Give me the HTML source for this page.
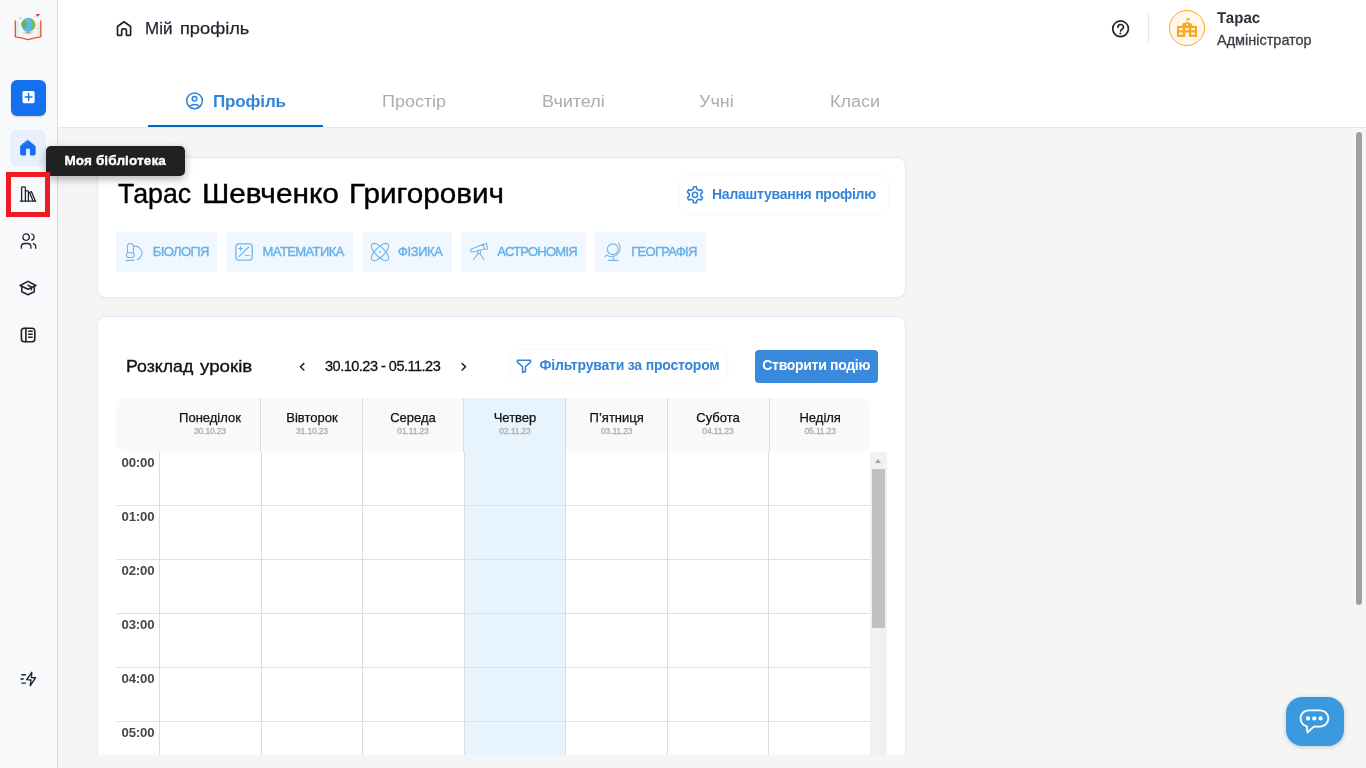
<!DOCTYPE html>
<html lang="uk">
<head>
<meta charset="utf-8">
<title>Мій профіль</title>
<style>
*{box-sizing:border-box;margin:0;padding:0}
html,body{width:1366px;height:768px;overflow:hidden}
body{font-family:"Liberation Sans",sans-serif;background:#f5f5f5;color:#111;position:relative}
.abs{position:absolute}
.t{position:absolute;white-space:nowrap;line-height:1}
/* sidebar */
#side{position:absolute;left:0;top:0;width:58px;height:768px;background:#f8f9fa;border-right:1px solid #dcdcdc}
#plus{left:11px;top:80px;width:35px;height:36px;border-radius:6px;background:#1570ef;box-shadow:0 1px 2px rgba(0,0,0,.15)}
#homeb{left:10px;top:130px;width:36px;height:36px;border-radius:6px;background:#e8f0fd}
#red{left:6px;top:172px;width:44px;height:45px;border:5px solid #ed1c24}
.ic{position:absolute;overflow:visible}
/* header */
#head{position:absolute;left:58px;top:0;width:1308px;height:128px;background:#fff;border-bottom:1px solid #dcecf9}
#tabline{left:148px;top:125px;width:175px;height:2px;background:#0466c8}
.tab{font-size:17.4px;color:#adadad;top:92.5px;transform:scaleX(1.033);transform-origin:0 50%}
.sx{transform-origin:0 50%}
.ttl{top:179.5px;font-size:28px;color:#000;-webkit-text-stroke:.4px #000}
.sch{top:357.6px;font-size:17.4px;color:#111;-webkit-text-stroke:.35px #111}
/* tooltip */
#tip{left:46px;top:146px;width:139px;height:30px;border-radius:5px;background:#212121;box-shadow:0 3px 9px rgba(0,0,0,.3)}
/* cards */
.card{position:absolute;background:#fff;border:1px solid #dcecfa;border-radius:9px;box-shadow:0 1px 3px rgba(0,0,0,.04)}
.tag{position:absolute;top:232px;height:39.5px;background:#f1f7fe}
.tag span{position:absolute;top:12.8px;font-size:13px;line-height:1;color:#63b0e8;letter-spacing:-0.6px;white-space:nowrap;-webkit-text-stroke:.35px #63b0e8}
.btnw{position:absolute;background:#fff;border-radius:7px;box-shadow:0 0 3px rgba(0,0,0,.06)}
.day{position:absolute;top:398px;height:53px;width:102px;text-align:center}
.day b{display:block;font-weight:400;font-size:13px;line-height:1;margin-top:13px;color:#111;-webkit-text-stroke:.25px #111}
.day i{display:block;font-style:normal;font-size:8.5px;line-height:1;margin-top:3.4px;color:#adadad;letter-spacing:-0.15px;-webkit-text-stroke:.3px #adadad}
.hl{position:absolute;left:116px;width:755px;height:1px;background:#e0e0e0}
.hv{position:absolute;top:398px;width:1px;height:54px;background:#dcdcdc}
.vl{position:absolute;top:452px;width:1px;height:303px;background:#dcdcdc}
.tm{position:absolute;left:114px;width:40.5px;text-align:right;font-size:13.2px;font-weight:700;line-height:1;color:#474747;letter-spacing:-.2px;padding-right:.2px}
</style>
</head>
<body>
<div id="app" style="position:absolute;left:0;top:0;width:1366px;height:768px;will-change:transform">
<!-- header -->
<div id="head"></div>
<div class="t sx" style="left:145.1px;top:19.5px;font-size:16.5px;color:#1f2430;-webkit-text-stroke:.25px #1f2430;transform:scaleX(1.03)">Мій</div>
<div class="t sx" style="left:179.6px;top:19.5px;font-size:16.5px;color:#1f2430;-webkit-text-stroke:.25px #1f2430;transform:scaleX(1.105)">профіль</div>
<div class="abs" style="left:1148px;top:14px;width:1px;height:29px;background:#e6e6e6"></div>
<div class="abs" style="left:1168.8px;top:9.6px;width:36.6px;height:36.6px;border-radius:50%;border:1.2px solid #f8a724;background:#fff8eb"></div>
<div class="t sx" style="left:1216.8px;top:9.9px;font-size:15.7px;font-weight:700;color:#2d3138;transform:scaleX(.961) rotate(.03deg)">Тарас</div>
<div class="t sx" style="left:1216.6px;top:33.1px;font-size:14.2px;color:#3a3e45;-webkit-text-stroke:.3px #3a3e45;transform:scaleX(1.02)">Адміністратор</div>

<!-- tabs -->
<div class="t" style="left:213px;top:92.5px;font-size:17px;letter-spacing:-.13px;font-weight:700;color:#3484d8">Профіль</div>
<div class="t tab" style="left:382px">Простір</div>
<div class="t tab" style="left:541.5px">Вчителі</div>
<div class="t tab" style="left:699px">Учні</div>
<div class="t tab" style="left:829.5px">Класи</div>
<div class="abs" id="tabline"></div>

<!-- main scrollbar -->
<div class="abs" style="left:1356px;top:132px;width:6px;height:473px;border-radius:3px;background:#a0a0a0;box-shadow:0 0 0 1px #f9f9f9"></div>

<!-- card 1 -->
<div class="card" style="left:97px;top:157px;width:809px;height:141px"></div>
<div class="t sx ttl" style="left:118.4px;transform:scaleX(.956)">Тарас</div>
<div class="t sx ttl" style="left:201.5px;transform:scaleX(1.064)">Шевченко</div>
<div class="t sx ttl" style="left:348.5px;transform:scaleX(1.06)">Григорович</div>
<div class="btnw" style="left:679.6px;top:175.8px;width:208px;height:38.6px"></div>
<div class="t" style="left:712px;top:187.4px;font-size:14px;letter-spacing:-.25px;font-weight:700;color:#3484d8">Налаштування профілю</div>

<div class="tag" style="left:116px;width:101px"><span style="left:36.8px">БІОЛОГІЯ</span></div>
<div class="tag" style="left:226px;width:127px"><span style="left:36.6px">МАТЕМАТИКА</span></div>
<div class="tag" style="left:362px;width:90px"><span style="left:36px;letter-spacing:-.4px">ФІЗИКА</span></div>
<div class="tag" style="left:461px;width:125px"><span style="left:36.3px;letter-spacing:-.75px">АСТРОНОМІЯ</span></div>
<div class="tag" style="left:595px;width:111px"><span style="left:36.2px;letter-spacing:-.7px">ГЕОГРАФІЯ</span></div>

<!-- card 2 -->
<div class="card" style="left:97px;top:316px;width:809px;height:461px;border-bottom-left-radius:0;border-bottom-right-radius:0"></div>
<div class="t sx sch" style="left:126.1px;transform:scaleX(1.019)">Розклад</div>
<div class="t sx sch" style="left:200.4px;transform:scaleX(1.077)">уроків</div>
<div class="t" style="left:325px;top:359px;font-size:14.5px;letter-spacing:-.5px;color:#111;-webkit-text-stroke:.3px #111">30.10.23 - 05.11.23</div>
<div class="btnw" style="left:511px;top:349.5px;width:216px;height:33.5px"></div>
<div class="t" style="left:539.5px;top:358.3px;font-size:14px;letter-spacing:-.2px;font-weight:700;color:#3484d8">Фільтрувати за простором</div>
<div class="abs" style="left:755px;top:350px;width:123px;height:33px;border-radius:4px;background:#3989dc"></div>
<div class="t" style="left:762.3px;top:357.7px;font-size:14px;letter-spacing:-.3px;font-weight:700;color:#fff">Створити подію</div>

<!-- table header -->
<div class="abs" style="left:116px;top:398px;width:754px;height:54px;border-radius:10px;background:#f8f9fb"></div>
<div class="abs" style="left:464px;top:398px;width:101px;height:357px;background:#e8f4fd"></div>
<div class="day" style="left:159px"><b>Понеділок</b><i>30.10.23</i></div>
<div class="day" style="left:261px"><b>Вівторок</b><i>31.10.23</i></div>
<div class="day" style="left:362px"><b>Середа</b><i>01.11.23</i></div>
<div class="day" style="left:464px"><b>Четвер</b><i>02.11.23</i></div>
<div class="day" style="left:565.7px"><b>П’ятниця</b><i>03.11.23</i></div>
<div class="day" style="left:667px"><b>Субота</b><i>04.11.23</i></div>
<div class="day" style="left:769.2px"><b>Неділя</b><i>05.11.23</i></div>

<div class="hv" style="left:260px"></div>
<div class="hv" style="left:362px"></div>
<div class="hv" style="left:463px"></div>
<div class="hv" style="left:565px"></div>
<div class="hv" style="left:667px"></div>
<div class="hv" style="left:769px"></div>
<!-- grid -->
<div class="hl" style="top:505px"></div>
<div class="hl" style="top:559px"></div>
<div class="hl" style="top:613px"></div>
<div class="hl" style="top:667px"></div>
<div class="hl" style="top:721px"></div>
<div class="vl" style="left:159px"></div>
<div class="vl" style="left:261px"></div>
<div class="vl" style="left:362px"></div>
<div class="vl" style="left:464px"></div>
<div class="vl" style="left:565px"></div>
<div class="vl" style="left:667px"></div>
<div class="vl" style="left:768px"></div>
<div class="tm" style="top:455.8px">00:00</div>
<div class="tm" style="top:509.8px">01:00</div>
<div class="tm" style="top:563.8px">02:00</div>
<div class="tm" style="top:617.8px">03:00</div>
<div class="tm" style="top:671.8px">04:00</div>
<div class="tm" style="top:725.8px">05:00</div>

<!-- inner scrollbar -->
<div class="abs" style="left:870px;top:452px;width:17px;height:303px;background:#f1f1f1"></div>
<div class="abs" style="left:872px;top:469px;width:13px;height:159px;background:#c1c1c1"></div>
<div class="abs" style="left:874.6px;top:458.8px;width:0;height:0;border-left:3.7px solid transparent;border-right:3.7px solid transparent;border-bottom:4px solid #a3a3a3"></div>

<!-- bottom mask -->
<div class="abs" style="left:59px;top:755px;width:1307px;height:13px;background:#f5f5f5"></div>

<!-- chat -->
<div class="abs" style="left:1286px;top:697px;width:58px;height:49px;border-radius:16px;background:#3b9ade;box-shadow:0 1px 4px rgba(0,0,0,.2)"></div>

<!-- sidebar -->
<div id="side"></div>
<div class="abs" id="plus"></div>
<div class="abs" id="homeb"></div>

<!-- tooltip -->
<div class="abs" id="tip"></div>
<div class="t" style="left:64.4px;top:153.6px;font-size:13.5px;font-weight:700;color:#fff;letter-spacing:.14px;-webkit-text-stroke:.35px #fff">Моя бібліотека</div>
<div class="abs" id="red"></div>

<svg class="abs" style="left:0;top:0;pointer-events:none" width="1366" height="768" viewBox="0 0 1366 768" fill="none" stroke-linecap="round" stroke-linejoin="round">
<!-- logo -->
<defs>
<linearGradient id="pgL" x1="0" x2="1" y1="0" y2="0"><stop offset="0" stop-color="#e4e4e4"/><stop offset=".35" stop-color="#f6f6f6"/><stop offset="1" stop-color="#fdfdfd"/></linearGradient>
<linearGradient id="pgR" x1="1" x2="0" y1="0" y2="0"><stop offset="0" stop-color="#e6e6e6"/><stop offset=".35" stop-color="#f4f4f4"/><stop offset="1" stop-color="#fbfbfb"/></linearGradient>
<radialGradient id="shd"><stop offset="0" stop-color="#8f8f8f"/><stop offset="1" stop-color="#cfcfcf" stop-opacity="0"/></radialGradient>
</defs>
<g>
<path d="M15.300 21 V36.800 C19 37.200 24 38.400 28.200 39.700 C32.400 38.400 37.400 37.200 40.800 36.800 V21" stroke="#e9531f" stroke-width="1.300" fill="none"/>
<path d="M16.200 21.300 C20 21.300 24.500 21.800 28.200 23.200 V38.600 C24 37.200 20 36.300 16.200 36Z" fill="url(#pgL)" stroke="none"/>
<path d="M40 21.300 C36.400 21.300 31.900 21.800 28.200 23.200 V38.600 C32.400 37.200 36.400 36.300 40 36Z" fill="url(#pgR)" stroke="none"/>
<ellipse cx="28.200" cy="32.400" rx="6.600" ry="2.800" fill="url(#shd)" stroke="none"/>
<circle cx="28.300" cy="24.800" r="7" fill="#5db4ee" stroke="none"/>
<path d="M22 22.400c1.200-1.500 2.700-2.200 3.600-1.600c.7 .9-.4 1.900 .1 3.100c.7 1.300 .7 2.600 .9 3.800c-1.500 .9-3.300-.1-4.400-1.500c-.9-1.300-1-2.700-.2-3.800z" fill="#6db52d" stroke="none"/>
<path d="M31 18.400c2.600 1 4.400 3.500 4.400 6.400c0 1.700-.6 3.200-1.700 4.300c-1.900 .5-3.600-.2-3.300-1.700c.3-1.500 2.300-1.900 2.500-3.400c.3-1.700-1.700-2.500-1.900-5.600z" fill="#7cc02e" stroke="none"/>
<ellipse cx="28.100" cy="21" rx="1.300" ry="1" fill="#9ccc3c" stroke="none"/>
<path d="M35.800 13.900 L40 14.100 L37.700 16.900Z" fill="#d33a30" stroke="none"/>
<path d="M33.300 17.400 L35.900 15.400" stroke="#f1b590" stroke-width=".9" stroke-dasharray="1.100 .7"/>
<ellipse cx="20.700" cy="18.300" rx="2.100" ry=".8" fill="#a9d4f5" stroke="none"/>
<ellipse cx="38" cy="28.800" rx="1.400" ry=".8" fill="#b9dcf7" stroke="none"/>
<ellipse cx="17" cy="27" rx="1" ry=".8" fill="#d3e9fa" stroke="none"/>
</g>
<!-- plus -->
<rect x="22.500" y="91" width="12.100" height="12.200" rx="1.600" fill="#fff" stroke="none"/>
<path d="M25.200 97.100H32M28.600 93.600V100.600" stroke="#1570ef" stroke-width="1.500"/>
<!-- home filled -->
<path d="M27.900 140.400 L35.100 146.200 V154 a1 1 0 0 1-1 1 H30.400 V148.200 H25.600 V155 H21.700 a1 1 0 0 1-1-1 V146.200Z" fill="#1570ef" stroke="#1570ef" stroke-width="1"/>
<!-- library -->
<g stroke="#1f2430" stroke-width="1.300">
<path d="M21.600 201.200V187.900a1 1 0 0 1 1-1h1.800a1 1 0 0 1 1 1V201.200"/>
<path d="M25.400 190.900h2.200a.8 .8 0 0 1 .8 .8V201.200"/>
<path d="M29.500 192.500l1.900-.9 3.900 9.400"/>
<path d="M29.500 192.500l3.700 8.700"/>
<path d="M20.300 201.200H35.700"/>
</g>
<!-- users -->
<g stroke="#1f2430" stroke-width="1.600" transform="translate(18.900 231.500) scale(.8)">
<circle cx="9" cy="7" r="4"/><path d="M3 21v-2a4 4 0 0 1 4-4h4a4 4 0 0 1 4 4v2"/><path d="M16 3.130a4 4 0 0 1 0 7.750"/><path d="M21 21v-2a4 4 0 0 0-3-3.850"/>
</g>
<!-- grad cap -->
<g stroke="#1f2430" stroke-width="1.500">
<path d="M28 281.300 L35.900 285.500 L28 289.300 L20.100 285.500Z"/>
<path d="M21.800 286.500V291.700L28 294.700L34.300 291.700V286.500"/>
<path d="M28 285.100L31.400 287.100V289.800"/>
</g>
<!-- notebook -->
<g stroke="#222" stroke-width="1.600">
<rect x="21.400" y="328.200" width="13.400" height="13.600" rx="2.800"/>
<path d="M25.900 328.400V341.600"/>
<path d="M28.700 331.300H32.200M28.700 334.300H32.200M28.700 337.200H32.200" stroke-width="1.500"/>
</g>
<!-- bolt -->
<g stroke="#1f2430" stroke-width="1.400">
<path d="M31.800 672.300 L26.700 679.600 L30.900 680 L30.300 685.700 L35.500 677.800 L31.400 677.500Z"/>
<path d="M21.400 674.700H25.900M20.400 679H23.700M21.400 683.100H25.900" stroke-linecap="butt"/>
</g>
<!-- header home -->
<path d="M124 21.800 L117.500 26.500 V34.400 a1 1 0 0 0 1 1 h2.200 a1 1 0 0 0 1-1 V30.200 a1.300 1.300 0 0 1 1.300-1.300 h2.100 a1.300 1.300 0 0 1 1.300 1.300 V34.400 a1 1 0 0 0 1 1 h2.200 a1 1 0 0 0 1-1 V26.500 Z" stroke="#1f2430" stroke-width="1.700"/>
<!-- help -->
<g stroke="#1f2430" stroke-width="1.700">
<circle cx="1120.550" cy="28.800" r="7.850"/>
<path d="M1117.900 27.200a2.750 2.500 0 1 1 4.100 2c-.9 .6-1.400 1-1.400 1.700"/>
<path d="M1120.300 33.500v.050" stroke-width="2"/>
</g>
<!-- school -->
<g fill="#f9a620" stroke="none">
<rect x="1177" y="25.900" width="20" height="11"/>
<path d="M1182.200 26V24.800a4.850 2.200 0 0 1 9.700 0V26Z"/>
<rect x="1186.600" y="18.300" width=".9" height="4.600"/>
<rect x="1187" y="18.300" width="2.900" height="1.800"/>
</g>
<g fill="#fef8ea" stroke="none">
<rect x="1179" y="28.100" width="3.800" height="2.100"/><rect x="1185.200" y="28.100" width="3.800" height="2.100"/><rect x="1191.200" y="28.100" width="3.800" height="2.100"/>
<rect x="1179" y="32.500" width="3.800" height="2.200"/><rect x="1185.200" y="32.500" width="3.800" height="4.500"/><rect x="1191.200" y="32.500" width="3.800" height="2.200"/>
<rect x="1186.100" y="24" width="1.900" height="1.500"/>
</g>
<!-- profile tab icon -->
<g stroke="#3182d8" stroke-width="1.500">
<circle cx="194.550" cy="100.850" r="7.850"/>
<circle cx="194.550" cy="98.700" r="2.300"/>
<path d="M189.400 106.500c1.300-1.400 3.100-2.100 5.150-2.100s3.850 .7 5.150 2.100"/>
</g>
<!-- gear -->
<g stroke="#3182d8" stroke-width="1.500">
<path d="M693.18 189.24 L693.59 186.87 L696.41 186.87 L696.82 189.24 L698.95 190.47 L701.20 189.64 L702.61 192.08 L700.77 193.62 L700.77 196.08 L702.61 197.62 L701.20 200.06 L698.95 199.23 L696.82 200.46 L696.41 202.83 L693.59 202.83 L693.18 200.46 L691.05 199.23 L688.80 200.06 L687.39 197.62 L689.23 196.08 L689.23 193.62 L687.39 192.08 L688.80 189.64 L691.05 190.47Z"/>
<circle cx="695" cy="194.850" r="2.600"/>
</g>
<!-- subject icons -->
<g stroke="#74b6ec" stroke-width="1.100">
<!-- microscope -->
<path d="M127.400 252.700V246.500a3 3 0 0 1 6 0V252.700"/>
<rect x="126.300" y="252.700" width="8" height="4.800" rx="2.400"/>
<path d="M126.300 260.400H134"/>
<path d="M133.600 246.300a6.900 6.900 0 0 1 3.600 13.300"/>
<!-- math -->
<rect x="235.900" y="243.900" width="16.300" height="16.300" rx="3.200" stroke-width="1.300"/>
<path d="M239 256.600L248.800 247"/>
<path d="M238.600 248.500H242.400M240.500 246.600V250.400"/>
<path d="M245.100 255.300H249.300"/>
<!-- atom -->
<ellipse cx="380" cy="252" rx="11.200" ry="4.600" transform="rotate(45 380 252)"/>
<ellipse cx="380" cy="252" rx="11.200" ry="4.600" transform="rotate(-45 380 252)"/>
<rect x="379.200" y="251.200" width="1.600" height="1.600" fill="#74b6ec" stroke="none"/>
<!-- telescope -->
<path d="M470.300 249.600L483.300 244.300L484.400 249L476.500 251.200L471.300 251.900Z"/>
<path d="M483.300 244.200L486.300 243.500L487.800 249.100L484.500 249.300"/>
<circle cx="479" cy="252.100" r="1.700"/>
<path d="M478.200 253.600L473.500 259.500M479.900 253.600L483.800 259.500"/>
<!-- globe -->
<circle cx="612.750" cy="249.250" r="5.400"/>
<path d="M618.500 243.300A8.500 8.500 0 0 1 606.600 255.100L604.900 256.600"/>
<path d="M613.500 257.700V260.400M608.300 260.400H617.800"/>
</g>
<!-- chevrons -->
<path d="M304.300 363.100L300.500 366.800L304.300 370.500M461.700 363.100L465.500 366.800L461.700 370.500" stroke="#222" stroke-width="1.500" stroke-linecap="butt" stroke-linejoin="miter"/>
<!-- filter -->
<path d="M517.400 360.300H530.500V362.100L525.500 366.700V371.500L522.600 372.600V366.700L517.400 362.100Z" stroke="#3182d8" stroke-width="1.500"/>
<!-- chat -->
<g stroke="#fff" stroke-width="1.800">
<path d="M1306.900 726.400A8.150 8.150 0 0 1 1308.850 710.300H1320.200A8.150 8.150 0 0 1 1320.200 726.600H1313.900L1307.300 732.500Z"/>
<circle cx="1308.100" cy="718.400" r="2.100" fill="#fff" stroke="none"/><circle cx="1314.300" cy="718.400" r="2.100" fill="#fff" stroke="none"/><circle cx="1320.600" cy="718.400" r="2.100" fill="#fff" stroke="none"/>
</g>
</svg>
</div>
</body>
</html>
